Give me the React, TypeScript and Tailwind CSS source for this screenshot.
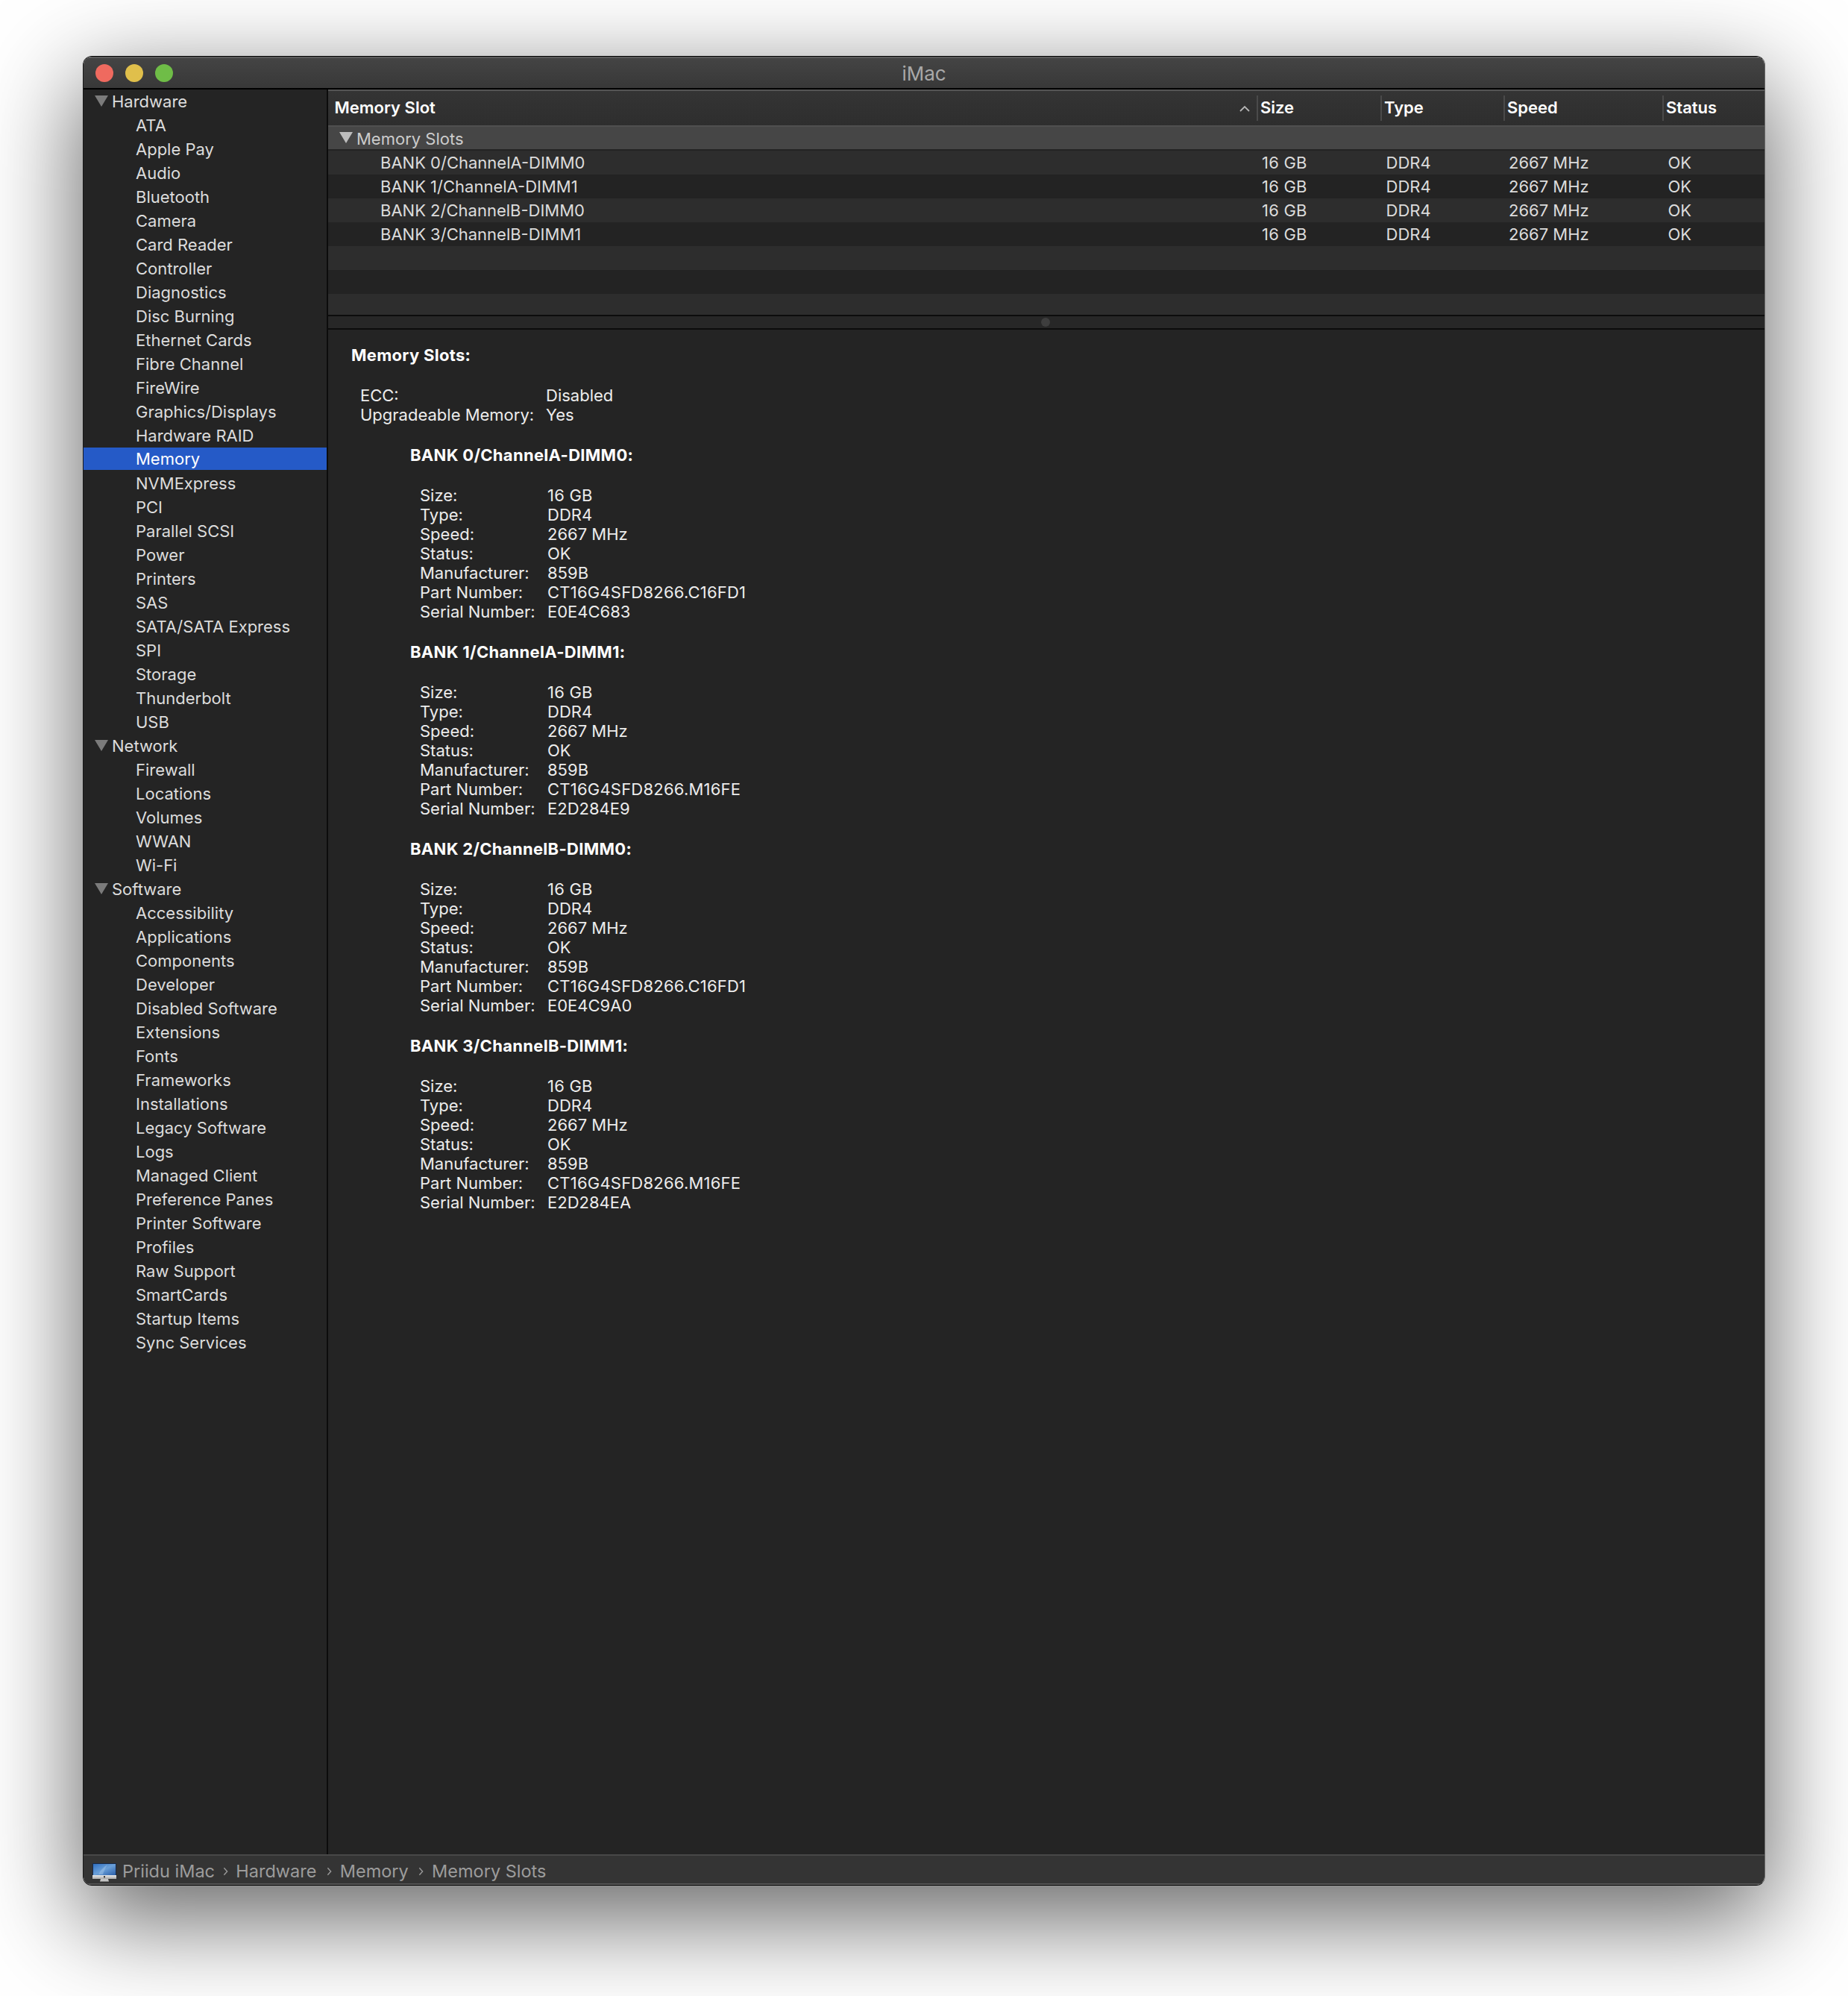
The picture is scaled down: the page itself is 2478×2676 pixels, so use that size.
import React from "react";

const hardware = ["ATA","Apple Pay","Audio","Bluetooth","Camera","Card Reader","Controller","Diagnostics","Disc Burning","Ethernet Cards","Fibre Channel","FireWire","Graphics/Displays","Hardware RAID","Memory","NVMExpress","PCI","Parallel SCSI","Power","Printers","SAS","SATA/SATA Express","SPI","Storage","Thunderbolt","USB"];
const network = ["Firewall","Locations","Volumes","WWAN","Wi-Fi"];
const software = ["Accessibility","Applications","Components","Developer","Disabled Software","Extensions","Fonts","Frameworks","Installations","Legacy Software","Logs","Managed Client","Preference Panes","Printer Software","Profiles","Raw Support","SmartCards","Startup Items","Sync Services"];
const sections = [{ name: "Hardware", items: hardware }, { name: "Network", items: network }, { name: "Software", items: software }];

const banks = [
  { name: "BANK 0/ChannelA-DIMM0", part: "CT16G4SFD8266.C16FD1", serial: "E0E4C683" },
  { name: "BANK 1/ChannelA-DIMM1", part: "CT16G4SFD8266.M16FE", serial: "E2D284E9" },
  { name: "BANK 2/ChannelB-DIMM0", part: "CT16G4SFD8266.C16FD1", serial: "E0E4C9A0" },
  { name: "BANK 3/ChannelB-DIMM1", part: "CT16G4SFD8266.M16FE", serial: "E2D284EA" },
];

function Triangle({ className }: { className: string }) {
  return (
    <svg viewBox="0 0 18 15" className={className} fill="currentColor">
      <path d="M0 0H18L9 15Z" />
    </svg>
  );
}

function Sidebar() {
  return (
    <div className="w-[326px] shrink-0 bg-[#242424] text-[#dcdcdc]">
      {sections.map((s) => (
        <div key={s.name}>
          <div className="h-[32px] flex items-center pl-[15px]">
            <Triangle className="w-[18px] h-[15px] -mt-[1px] text-[#7b7b7b]" />
            <span className="ml-[5px]">{s.name}</span>
          </div>
          {s.items.map((i) =>
            i === "Memory" ? (
              <div key={i} className="h-[32px] pb-[2px]">
                <div className="h-[30px] bg-[#255ac7] text-white flex items-center pl-[70px] pt-[1px]">{i}</div>
              </div>
            ) : (
              <div key={i} className="h-[32px] flex items-center pl-[70px]">{i}</div>
            )
          )}
        </div>
      ))}
    </div>
  );
}

function HeaderCell({ label }: { label: string }) {
  return (
    <div className="relative flex items-center pl-[5px] pb-[2px]">
      <span className="absolute left-0 top-[6px] bottom-[6px] w-[2px] bg-[#4a4a4a]" />
      {label}
    </div>
  );
}

const gridCols = "grid grid-cols-[1245px_166px_165px_213px_1fr]";

function Table() {
  return (
    <div>
      <div className={`${gridCols} h-[48px] border-t-2 border-[#555555] bg-gradient-to-b from-[#343434] to-[#2e2e2e] text-white font-semibold`}>
        <div className="relative flex items-center pl-[8.5px] pb-[2px]">
          Memory Slot
          <svg viewBox="0 0 14 9" className="absolute right-[9px] top-[19px] w-[14px] h-[9px]" fill="none" stroke="#b5b5b5" strokeWidth="1.8">
            <path d="M1 8L7 2L13 8" />
          </svg>
        </div>
        <HeaderCell label="Size" />
        <HeaderCell label="Type" />
        <HeaderCell label="Speed" />
        <HeaderCell label="Status" />
      </div>
      <div className="h-[34px] border-t-2 border-b-2 border-t-[#505050] border-b-[#232323] bg-[#464646] text-[#cccccc] flex items-center pl-[15px]">
        <Triangle className="w-[18px] h-[15px] -mt-[1px] text-[#bdbdbd]" />
        <span className="ml-[5px] mt-[2px]">Memory Slots</span>
      </div>
      <div className="text-[#dcdcdc]">
        {banks.map((b, i) => (
          <div key={b.name} className={`${gridCols} h-[32px] items-center ${i % 2 === 0 ? "bg-[#2d2d2d]" : "bg-[#232323]"}`}>
            <div className="pl-[70px]">{b.name}</div>
            <div className="pl-[7px] tracking-[0.2px]">16 GB</div>
            <div className="pl-[7.5px]">DDR4</div>
            <div className="pl-[7px]">2667 MHz</div>
            <div className="pl-[7.5px]">OK</div>
          </div>
        ))}
        <div className="h-[32px] bg-[#2d2d2d]" />
        <div className="h-[32px] bg-[#232323]" />
        <div className="h-[28px] bg-[#2d2d2d]" />
      </div>
      <div className="h-[20px] border-y-2 border-[#0c0c0c] bg-[#272727] flex items-center justify-center pr-[2px]">
        <span className="w-[12px] h-[12px] rounded-full bg-[#3e3e3e]" />
      </div>
    </div>
  );
}

function Line({ label, value, labelW, valueClass = "" }: { label: string; value: string; labelW: string; valueClass?: string }) {
  return (
    <div className="flex h-[26px] items-center whitespace-pre">
      <span className={labelW}>{label}</span>
      <span className={valueClass}>{value}</span>
    </div>
  );
}

function Details() {
  return (
    <div className="flex-1 bg-[#242424] text-[#ececec] pt-[21px] pl-[31px] leading-[26px]">
      <div className="h-[26px] font-bold tracking-[0.3px] text-white">Memory Slots:</div>
      <div className="mt-[28px] pl-[12px]">
        <Line label="ECC:" value="Disabled" labelW="w-[249px]" />
        <Line label="Upgradeable Memory:" value="Yes" labelW="w-[249px]" />
      </div>
      {banks.map((b) => (
        <div key={b.name} className="mt-[28px] pl-[79px]">
          <div className="h-[26px] font-bold tracking-[0.3px] text-white">{b.name}:</div>
          <div className="mt-[28px] pl-[13px]">
            <Line label="Size:" value="16 GB" labelW="w-[171px]" valueClass="tracking-[0.2px]" />
            <Line label="Type:" value="DDR4" labelW="w-[171px]" />
            <Line label="Speed:" value="2667 MHz" labelW="w-[171px]" />
            <Line label="Status:" value="OK" labelW="w-[171px]" />
            <Line label="Manufacturer:" value="859B" labelW="w-[171px]" />
            <Line label="Part Number:" value={b.part} labelW="w-[171px]" valueClass="tracking-[0.22px]" />
            <Line label="Serial Number:" value={b.serial} labelW="w-[171px]" />
          </div>
        </div>
      ))}
    </div>
  );
}

function IMacIcon() {
  return (
    <svg viewBox="0 0 32 26" className="w-[32px] h-[26px] shrink-0 mt-[4px]">
      <defs>
        <linearGradient id="scr" x1="0" y1="0" x2="1" y2="1">
          <stop offset="0" stopColor="#2f6fc0" />
          <stop offset="0.5" stopColor="#6a9fd8" />
          <stop offset="1" stopColor="#2a5ea8" />
        </linearGradient>
        <linearGradient id="chin" x1="0" y1="0" x2="0" y2="1">
          <stop offset="0" stopColor="#e8e8e8" />
          <stop offset="1" stopColor="#a8a8a8" />
        </linearGradient>
      </defs>
      <rect x="0" y="0" width="32" height="16" fill="#16294a" />
      <rect x="1" y="1" width="30" height="15" fill="url(#scr)" />
      <path d="M8 15C11 9 15 5 20 2C17 7 15 11 14 15Z" fill="#a9c9ec" opacity="0.45" />
      <rect x="0" y="16" width="32" height="5" fill="url(#chin)" />
      <rect x="15" y="17" width="2" height="2.5" fill="#444444" />
      <path d="M11 21H21L22 24.5H10Z" fill="#c4c4c4" />
    </svg>
  );
}

function Chevron() {
  return (
    <svg viewBox="0 0 8 14" className="w-[7px] h-[12px] shrink-0" fill="none" stroke="#9a9a9a" strokeWidth="1.6">
      <path d="M1.5 1.5L6.5 7L1.5 12.5" />
    </svg>
  );
}

function StatusBar() {
  return (
    <div className="h-[41px] border-t-2 border-b-2 border-t-[#484848] border-b-[#555555] bg-[#343434] text-[#9c9c9c] text-[23.5px] flex items-center pl-[12px] pt-[4px]">
      <IMacIcon />
      <span className="ml-[8px]">Priidu iMac</span>
      <span className="ml-[11px]"><Chevron /></span>
      <span className="ml-[10.3px]">Hardware</span>
      <span className="ml-[14px]"><Chevron /></span>
      <span className="ml-[10.3px]">Memory</span>
      <span className="ml-[13px]"><Chevron /></span>
      <span className="ml-[11.3px]">Memory Slots</span>
    </div>
  );
}

export default function App() {
  return (
    <div className="min-h-[2676px] bg-white pt-[75px] pl-[111px] pr-[111px] font-['Inter','Liberation_Sans',sans-serif] text-[22px] antialiased overflow-hidden">
      <div className="h-[2453px] flex flex-col rounded-[12px] overflow-hidden border border-l-[#1a1a1a] border-t-black border-b-black border-r-[#666666] shadow-[0_40px_130px_6px_rgba(0,0,0,0.6)]">
        <div className="h-[44px] shrink-0 border-t-2 border-b-2 border-t-[#5a5a5a] border-b-black bg-gradient-to-b from-[#444444] to-[#383838] flex items-center relative">
          <div className="flex gap-[16px] pl-[16px]">
            <span className="w-[24px] h-[24px] rounded-full bg-[#ef6a5f]" />
            <span className="w-[24px] h-[24px] rounded-full bg-[#e0bf4b]" />
            <span className="w-[24px] h-[24px] rounded-full bg-[#6fbd47]" />
          </div>
          <span className="absolute inset-x-0 text-center text-[26px] text-[#a8a8a8]">iMac</span>
        </div>
        <div className="flex-1 flex min-h-0">
          <Sidebar />
          <div className="w-[2px] shrink-0 bg-[#0c0c0c]" />
          <div className="flex-1 flex flex-col min-w-0">
            <Table />
            <Details />
          </div>
        </div>
        <StatusBar />
      </div>
    </div>
  );
}
